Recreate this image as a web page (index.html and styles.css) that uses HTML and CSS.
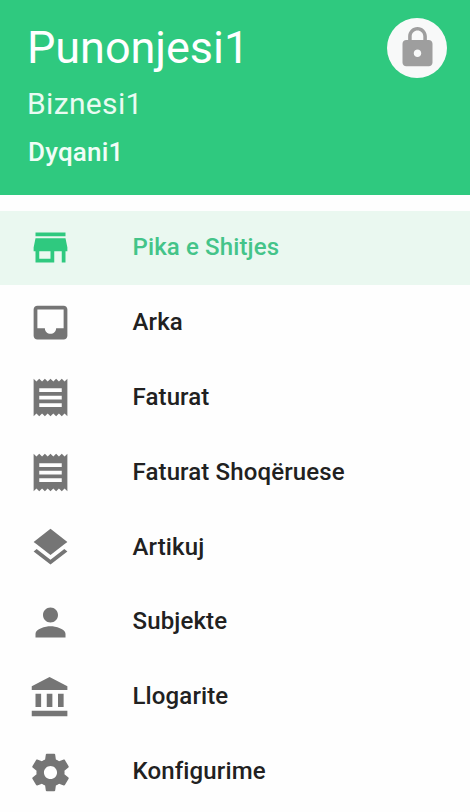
FILE: index.html
```html
<!DOCTYPE html>
<html lang="sq">
<head>
<meta charset="utf-8">
<title>Menu</title>
<link rel="stylesheet" href="styles.css">
</head>
<body>
<header class="header">
  <div class="identity">
    <h1 class="name">Punonjesi1</h1>
    <p class="business">Biznesi1</p>
    <p class="shop">Dyqani1</p>
  </div>
  <button class="lock" aria-label="Lock"><svg viewBox="0 0 24 24"><path d="M18 8h-1V6c0-2.760-2.240-5-5-5S7 3.240 7 6v2H6c-1.100 0-2 .9-2 2v10c0 1.100.9 2 2 2h12c1.100 0 2-.9 2-2V10c0-1.100-.9-2-2-2zm-6 9c-1.100 0-2-.9-2-2s.9-2 2-2 2 .9 2 2-.9 2-2 2zm3.100-9H8.900V6c0-1.710 1.390-3.100 3.100-3.100s3.100 1.390 3.100 3.100v2z"/></svg></button>
</header>
<nav class="menu">
  <a class="item active"><svg viewBox="0 0 24 24"><path d="M20 4H4v2h16V4zm1 10v-2l-1-5H4l-1 5v2h1v6h10v-6h4v6h2v-6h1zm-9 4H6v-4h6v4z"/></svg><span>Pika e Shitjes</span></a>
  <a class="item"><svg viewBox="0 0 24 24"><path d="M19 3H5c-1.100 0-2 .9-2 2v14c0 1.100.89 2 2 2h14c1.100 0 2-.9 2-2V5c0-1.100-.9-2-2-2zm0 12h-4c0 1.660-1.350 3-3 3s-3-1.340-3-3H5V5h14v10z"/></svg><span>Arka</span></a>
  <a class="item"><svg viewBox="0 0 24 24"><path d="M18 17H6v-2h12v2zm0-4H6v-2h12v2zm0-4H6V7h12v2zM3 22l1.500-1.500L6 22l1.500-1.500L9 22l1.500-1.500L12 22l1.500-1.500L15 22l1.500-1.500L18 22l1.500-1.500L21 22V2l-1.500 1.500L18 2l-1.500 1.500L15 2l-1.500 1.500L12 2l-1.500 1.500L9 2 7.500 3.500 6 2 4.500 3.500 3 2v20z"/></svg><span>Faturat</span></a>
  <a class="item"><svg viewBox="0 0 24 24"><path d="M18 17H6v-2h12v2zm0-4H6v-2h12v2zm0-4H6V7h12v2zM3 22l1.500-1.500L6 22l1.500-1.500L9 22l1.500-1.500L12 22l1.500-1.500L15 22l1.500-1.500L18 22l1.500-1.500L21 22V2l-1.500 1.500L18 2l-1.500 1.500L15 2l-1.500 1.500L12 2l-1.500 1.500L9 2 7.500 3.500 6 2 4.500 3.500 3 2v20z"/></svg><span>Faturat Shoqëruese</span></a>
  <a class="item"><svg viewBox="0 0 24 24"><path d="M11.990 18.540l-7.370-5.730L3 14.070l9 7 9-7-1.630-1.270-7.380 5.740zM12 16l7.360-5.730L21 9l-9-7-9 7 1.630 1.270L12 16z"/></svg><span>Artikuj</span></a>
  <a class="item"><svg viewBox="0 0 24 24"><path d="M12 12c2.210 0 4-1.790 4-4s-1.790-4-4-4-4 1.790-4 4 1.790 4 4 4zm0 2c-2.670 0-8 1.340-8 4v2h16v-2c0-2.660-5.330-4-8-4z"/></svg><span>Subjekte</span></a>
  <a class="item"><svg viewBox="0 0 24 24"><path d="M4 10v7h3v-7H4zm6 0v7h3v-7h-3zM2 22h19v-3H2v3zm14-12v7h3v-7h-3zm-4.500-9L2 6v2h19V6l-9.500-5z"/></svg><span>Llogarite</span></a>
  <a class="item"><svg viewBox="0 0 24 24"><path d="M19.430 12.980c.04-.32.07-.64.07-.98s-.03-.66-.07-.98l2.110-1.650c.19-.15.24-.42.12-.64l-2-3.460c-.12-.22-.39-.3-.61-.22l-2.490 1c-.52-.4-1.080-.73-1.690-.98l-.38-2.650C14.460 2.180 14.250 2 14 2h-4c-.25 0-.46.18-.49.42l-.38 2.650c-.61.25-1.170.59-1.690.98l-2.490-1c-.23-.09-.49 0-.61.22l-2 3.460c-.13.22-.07.49.12.64l2.110 1.650c-.04.32-.07.65-.07.98s.03.66.07.98l-2.110 1.650c-.19.15-.24.42-.12.64l2 3.460c.12.22.39.3.61.22l2.490-1c.52.4 1.080.73 1.690.98l.38 2.650c.03.24.24.42.49.42h4c.25 0 .46-.18.49-.42l.38-2.650c.61-.25 1.170-.59 1.690-.98l2.490 1c.23.09.49 0 .61-.22l2-3.460c.12-.22.07-.49-.12-.64l-2.110-1.650zM12 15.500c-1.930 0-3.500-1.570-3.500-3.500s1.570-3.500 3.500-3.500 3.500 1.570 3.500 3.500-1.570 3.500-3.500 3.500z"/></svg><span>Konfigurime</span></a>
</nav>
</body>
</html>
```
FILE: styles.css
```css
* { box-sizing: border-box; }
body { margin: 0; height: 812px; overflow: hidden; background: #fefefe; font-family: Roboto, sans-serif; color: #212121; }
.header { display: flex; justify-content: space-between; height: 194.500px; padding: 18px 23px 0 28px; background: #2fc97f; color: #fff; }
.name, .business, .shop { margin: 0; }
.name { margin-left: -1px; font-size: 45px; font-weight: 400; line-height: 60px; letter-spacing: -0.05px; }
.business { margin-top: 8px; margin-left: -1px; font-size: 30px; line-height: 36px; letter-spacing: 0.35px; color: #e9fbf2; }
.shop { margin-top: 12px; font-size: 26px; font-weight: 500; line-height: 36px; letter-spacing: 0.2px; color: #f1fdf7; }
.lock { display: flex; align-items: center; justify-content: center; width: 60px; height: 60px; padding: 0 0 1px; border: 0; border-radius: 50%; background: #f8f9f9; }
.lock svg { width: 45px; height: 45px; fill: #9e9e9e; }
.menu { padding-top: 16px; }
.item { display: flex; align-items: center; height: 74.900px; padding-left: 27.500px; font-size: 24px; font-weight: 500; letter-spacing: 0.13px; }
.item svg { flex: none; width: 45px; height: 45px; margin-right: 60px; fill: #757575; }
.item span { padding-bottom: 2px; }
.active { background: #eaf8f0; color: #44c489; }
.active svg { fill: #2fc97f; }
```
